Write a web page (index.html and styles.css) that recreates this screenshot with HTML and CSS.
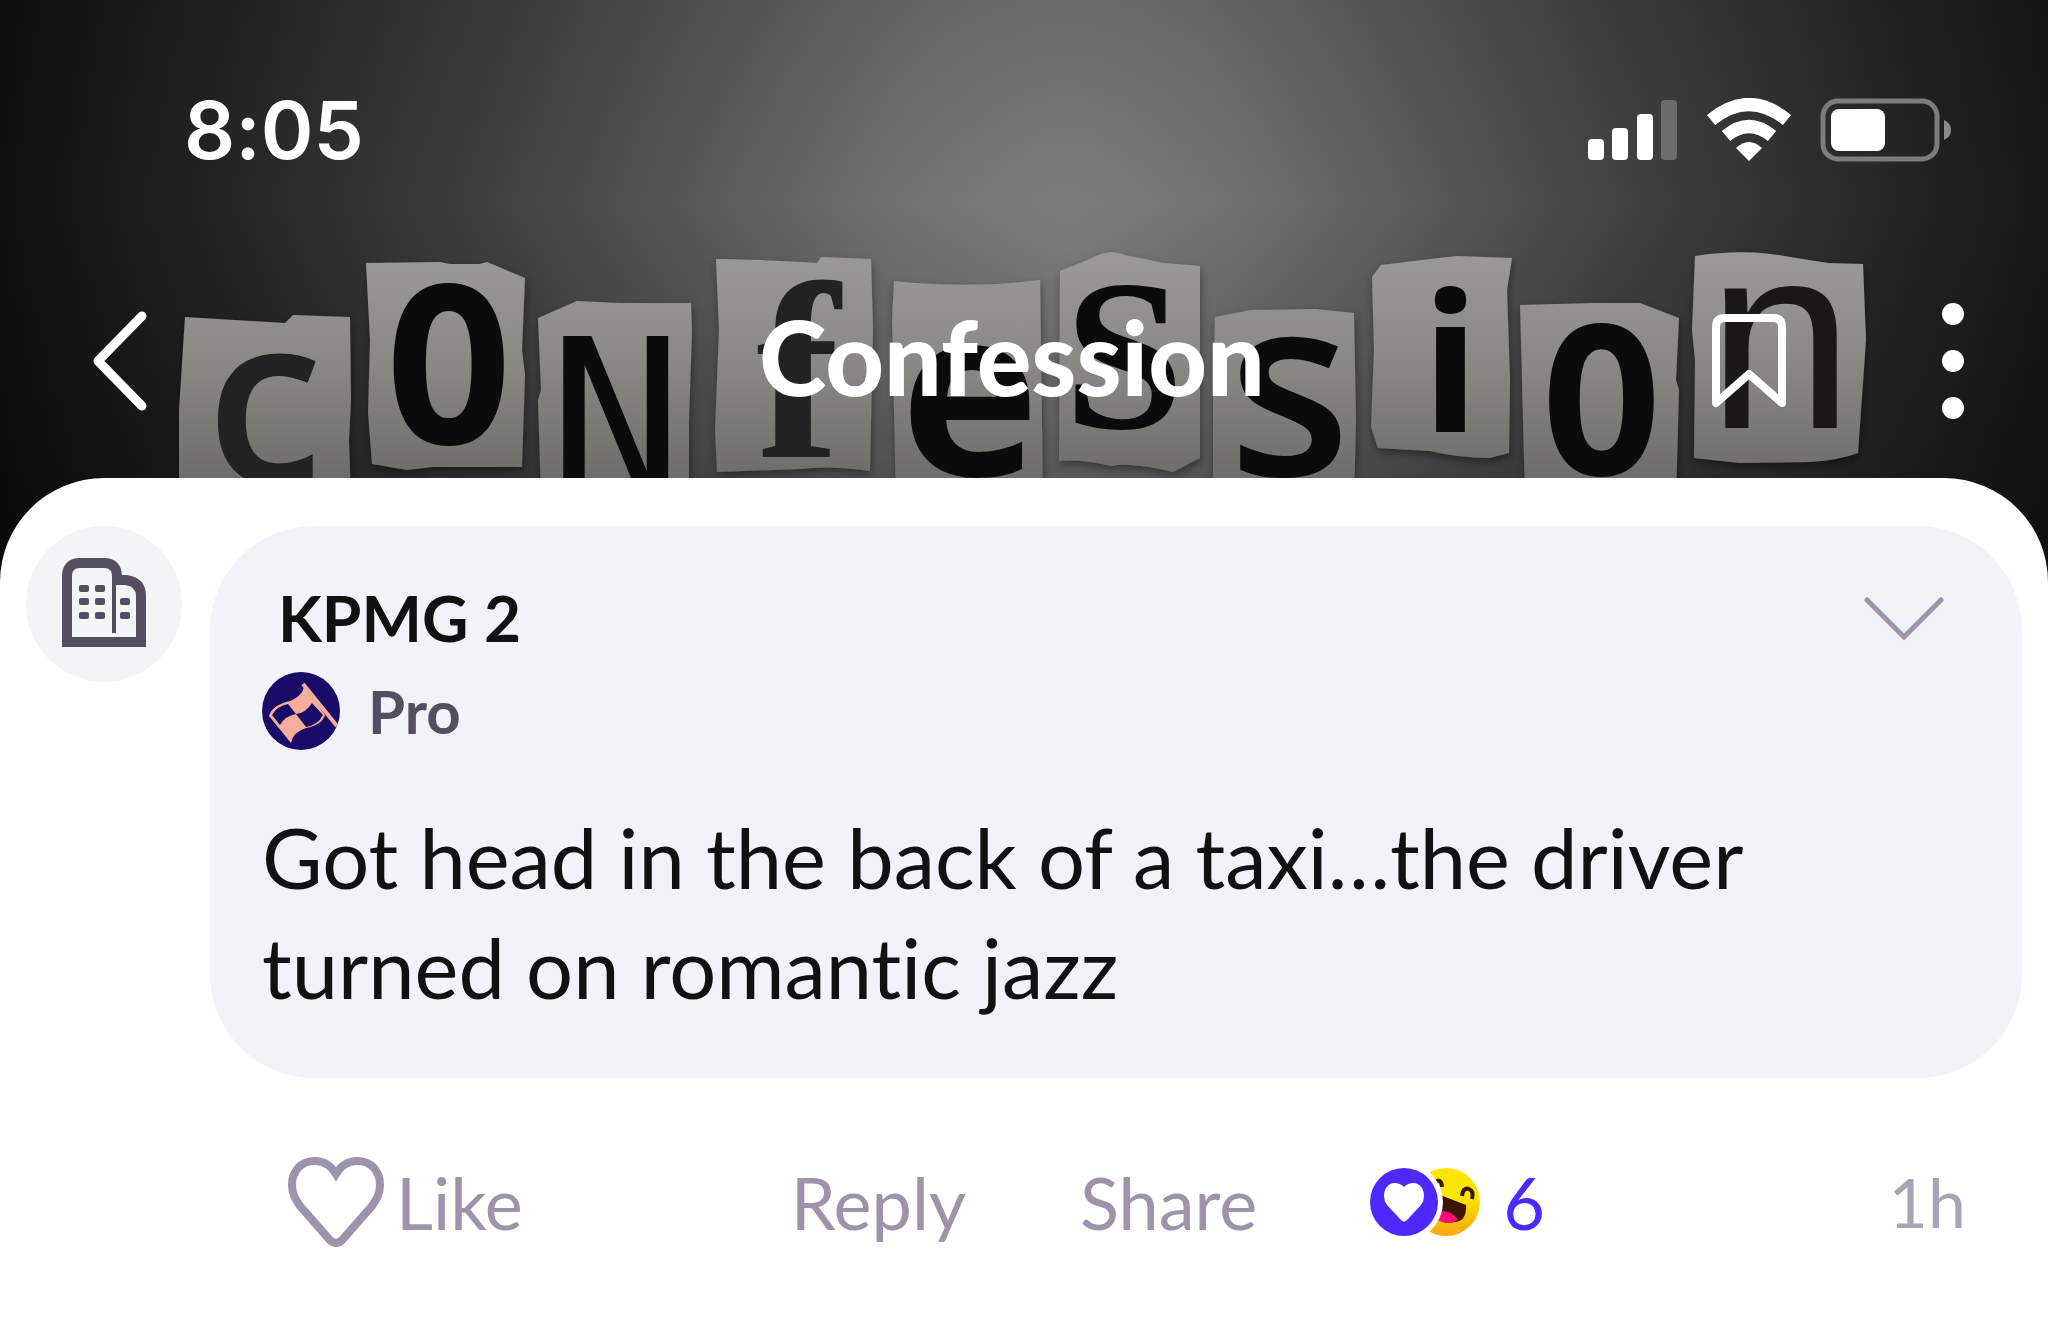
FILE: index.html
```html
<!DOCTYPE html>
<html lang="en">
<head>
    <meta charset="UTF-8">
    <meta name="viewport" content="width=device-width, initial-scale=1.0">
    <title>Confession</title>

    <link rel="stylesheet" href="styles.css">
</head>
<body>
    <header class="hero">
        <!-- Cover art: ransom note letters -->
        <svg class="cover" viewBox="0 0 2048 582" preserveAspectRatio="xMidYMin slice" aria-hidden="true">
            <defs>
                <linearGradient id="paper" gradientUnits="userSpaceOnUse" x1="0" y1="250" x2="0" y2="480">
                    <stop offset="0" stop-color="#9c9a98"/>
                    <stop offset="0.5" stop-color="#898885"/>
                    <stop offset="1" stop-color="#6d6c68"/>
                </linearGradient>
                <filter id="soft" x="-5%" y="-5%" width="110%" height="110%">
                    <feDropShadow dx="1" dy="4" stdDeviation="4" flood-color="#000" flood-opacity="0.4"/>
                </filter>
            </defs>
            <g fill="url(#paper)" filter="url(#soft)">
                <path d="M185 317L285 323L293 315L350 317L351 400L349 440L351 500H179V410Z"/>
                <path d="M366 263L440 262L450 264L480 264L487 262L525 278L522 350L525 375L522 467H432L407 470L372 464L368 413L370 340Z"/>
                <path d="M538 318L577 301L620 303L691 303L692 330L689 420V500H541L538 400L541 390Z"/>
                <path d="M716 259Q780 260 817 263L821 257L871 259L873 330L870 471Q830 465 800 469L717 472L715 430L719 330Z"/>
                <path d="M894 281Q969 289 1040 280L1043 500H896L892 320Z"/>
                <path d="M1060 271L1090 259Q1108 248 1125 255L1164 263L1200 266V458L1173 472Q1130 462 1112 466Q1080 459 1059 461Z"/>
                <path d="M1215 317L1251 310L1316 309L1354 313L1356 420L1354 500H1213V400Z"/>
                <path d="M1372 277L1381 265Q1420 260 1457 256L1512 258L1507 290L1510 380L1509 453L1489 458Q1460 458 1430 451L1378 448L1371 427L1374 350Z"/>
                <path d="M1520 305L1593 303L1640 303L1679 318L1676 380L1679 390L1676 500H1525L1521 340Z"/>
                <path d="M1695 256Q1746 248 1790 257L1828 263L1863 264L1866 340L1858 453Q1840 460 1810 462L1740 463L1694 458L1695 360L1692 330Z"/>
            </g>
            <g class="letters">
                <text class="sans dim" x="206" y="484" font-size="236">c</text>
                <text class="mono bold" x="384" y="443" font-size="215">O</text>
                <text class="mono" x="548" y="500" font-size="225">N</text>
                <text class="serif dim" x="756" y="457" font-size="252">f</text>
                <text class="sans bold" x="900" y="476" font-size="236">e</text>
                <text class="serif bold" x="1064" y="428" font-size="216">S</text>
                <text class="sans" x="1228" y="476" font-size="252">s</text>
                <text class="sans bold" x="1421" y="432" font-size="193">i</text>
                <text class="mono bold" x="1540" y="474" font-size="204">O</text>
                <text class="plain" x="1707" y="428" font-size="264">n</text>
            </g>
        </svg>

        <div class="statusbar">
            <span class="time">8:05</span>
            <div class="status-icons">
                <svg width="91" height="62" viewBox="0 0 91 62" aria-hidden="true">
                    <g fill="#fff">
                        <rect x="1" y="40" width="16" height="21" rx="4"/>
                        <rect x="25" y="29" width="16" height="32" rx="4"/>
                        <rect x="50" y="15" width="16" height="46" rx="4"/>
                        <rect x="74" y="1" width="16" height="60" rx="4" opacity="0.25"/>
                    </g>
                </svg>
                <svg width="86" height="64" viewBox="0 0 86 64" aria-hidden="true">
                    <g fill="none" stroke="#fff" stroke-width="13">
                        <path d="M5 22Q43 -9 81 22"/>
                        <path d="M20 38Q43 19 66 38"/>
                    </g>
                    <path d="M30 50Q43 38 56 50L43 63Z" fill="#fff"/>
                </svg>
                <svg width="132" height="64" viewBox="0 0 132 64" aria-hidden="true">
                    <rect x="3" y="3" width="114" height="58" rx="15" fill="none" stroke="#7c7c7c" stroke-width="5"/>
                    <rect x="11" y="11" width="54" height="42" rx="8" fill="#fff"/>
                    <path d="M124 22Q131 25 131 32Q131 39 124 42Z" fill="#8a8a8a"/>
                </svg>
            </div>
        </div>

        <nav class="navbar">
            <button class="icon-btn back" aria-label="Back">
                <svg width="60" height="104" viewBox="0 0 60 104">
                    <path d="M54 7L10 52L54 97" fill="none" stroke="#fff" stroke-width="9" stroke-linecap="round" stroke-linejoin="round"/>
                </svg>
            </button>
            <h1 class="title">Confession</h1>
            <div class="nav-actions">
                <button class="icon-btn" aria-label="Bookmark">
                    <svg width="76" height="98" viewBox="0 0 76 98">
                        <path d="M5 91V15Q5 6 14 6H62Q71 6 71 15V91L38 62Z" fill="none" stroke="#fff" stroke-width="8" stroke-linejoin="round"/>
                    </svg>
                </button>
                <button class="icon-btn" aria-label="More">
                    <svg width="22" height="118" viewBox="0 0 22 118">
                        <g fill="#fff">
                            <circle cx="11" cy="12" r="11"/>
                            <circle cx="11" cy="59" r="11"/>
                            <circle cx="11" cy="106" r="11"/>
                        </g>
                    </svg>
                </button>
            </div>
        </nav>
    </header>

    <main class="sheet">
        <article class="comment">
            <!-- Company avatar -->
            <div class="avatar">
                <svg width="84" height="92" viewBox="0 0 84 92" aria-hidden="true">
                    <g fill="none" stroke="#544e60" stroke-width="10">
                        <path d="M5 84V19Q5 5 18 5H42Q55 5 55 19V22H64Q79 24 79 38V84Z"/>
                        <path d="M52 18V75" stroke-width="4"/>
                        <path d="M53 22H65"/>
                    </g>
                    <g fill="#544e60">
                        <rect x="17" y="27" width="10" height="7" rx="2"/>
                        <rect x="33" y="27" width="10" height="7" rx="2"/>
                        <rect x="17" y="40" width="10" height="7" rx="2"/>
                        <rect x="33" y="40" width="10" height="7" rx="2"/>
                        <rect x="58" y="40" width="10" height="7" rx="2"/>
                        <rect x="17" y="54" width="10" height="7" rx="2"/>
                        <rect x="33" y="54" width="10" height="7" rx="2"/>
                        <rect x="58" y="54" width="10" height="7" rx="2"/>
                    </g>
                </svg>
            </div>

            <div class="comment-body">
                <div class="bubble">
                    <div class="bubble-head">
                        <h2 class="author">KPMG 2</h2>
                        <button class="icon-btn" aria-label="Options">
                            <svg width="80" height="46" viewBox="0 0 80 46">
                                <path d="M3 5L40 42L77 5" fill="none" stroke="#9d93ab" stroke-width="5" stroke-linecap="round"/>
                            </svg>
                        </button>
                    </div>
                    <div class="badge">
                        <svg width="78" height="78" viewBox="0 0 78 78" aria-hidden="true">
                            <circle cx="39" cy="39" r="39" fill="#1b0b68"/>
                            <path d="M41 12L75 54" stroke="#f5ae9c" stroke-width="4"/>
                            <path d="M42 13Q42 23 28 29Q10 33 7 44L29 71Q31 60 44 56Q60 53 63 43Z" fill="#f5ae9c"/>
                            <path d="M10 43Q15 34 26 32L34 42Q23 44 18 53Z" fill="#1b0b68"/>
                            <path d="M34 42Q44 41 50 31L61 43Q56 53 44 55Z" fill="#1b0b68"/>
                        </svg>
                        <span>Pro</span>
                    </div>
                    <p class="message">Got head in the back of a taxi…the driver turned on romantic jazz</p>
                </div>

                <div class="actions">
                    <button class="action like">
                        <svg width="96" height="92" viewBox="0 0 96 92" aria-hidden="true">
                            <path d="M48 18C42 8 35 5 27 5C13 5 4 15 4 29C4 38 8 44 12 50L41 83Q48 91 55 83L84 50C88 44 92 38 92 29C92 15 83 5 69 5C61 5 54 8 48 18Z" fill="none" stroke="#9d93ab" stroke-width="8"/>
                        </svg>
                        Like
                    </button>
                    <button class="action reply">Reply</button>
                    <button class="action share">Share</button>
                    <button class="action reactions">
                        <svg width="112" height="70" viewBox="0 0 112 70" aria-hidden="true">
                            <defs>
                                <linearGradient id="smile" x1="0" y1="0" x2="0" y2="1">
                                    <stop offset="0.4" stop-color="#ffe600"/>
                                    <stop offset="1" stop-color="#ffa712"/>
                                </linearGradient>
                            </defs>
                            <circle cx="77" cy="35" r="34" fill="url(#smile)"/>
                            <path d="M64 17Q72 9 73 20" fill="none" stroke="#3a1505" stroke-width="4"/>
                            <path d="M93 29Q94 20 100 22Q105 24 103 32" fill="none" stroke="#3a1505" stroke-width="4"/>
                            <path d="M66 26L97 38Q98 54 86 55Q74 58 66 50Z" fill="#3a1505"/>
                            <path d="M66 43Q83 43 89 53Q76 60 66 50Z" fill="#ff0a7a"/>
                            <circle cx="35" cy="35" r="39" fill="#fff"/>
                            <circle cx="35" cy="35" r="34" fill="#4d29ff"/>
                            <path d="M35 20C32 17 29 16 26 16C19 16 15 22 15 29Q15 34 18 38L32 53Q35 56 38 53L52 38Q55 34 55 29C55 22 51 16 44 16C41 16 38 17 35 20Z" fill="#fff"/>
                        </svg>
                        6
                    </button>
                    <time class="age">1h</time>
                </div>
            </div>
        </article>
    </main>
</body>
</html>
```
FILE: styles.css
```css
/* Page */
body {
    margin: 0;
    background-color: #fff;
    font-family: Lato, 'Open Sans', sans-serif;
    font-variant-ligatures: none;
    color: #111;
}

button {
    border: none;
    padding: 0;
    background: none;
    font-family: inherit;
    cursor: pointer;
}

svg {
    display: block;
    flex-shrink: 0;
}

/* Header */
.hero {
    position: relative;
    padding: 90px 96px 160px 60px;
    background:
        linear-gradient(rgba(0, 0, 0, 0.1), rgba(0, 0, 0, 0) 35%, rgba(0, 0, 0, 0.35)),
        radial-gradient(ellipse 54% 380% at 52% 40%, #7e7e7e 0%, #727272 15%, #454545 48%, #272727 74%, #0c0c0c 100%);
}

.cover {
    position: absolute;
    top: 0;
    left: 0;
    width: 100%;
    height: 100%;
}

.letters {
    fill: #0b0b0b;
}

.letters .dim {
    fill: #222;
}

.letters .sans {
    font-family: 'Open Sans', sans-serif;
    font-weight: 600;
}

.letters .plain {
    font-family: 'Liberation Sans', sans-serif;
    fill: #191817;
}

.letters .mono {
    font-family: 'DejaVu Sans Mono', monospace;
}

.letters .serif {
    font-family: 'Liberation Serif', serif;
    font-weight: 700;
}

.letters .bold {
    font-weight: 700;
}

.statusbar {
    position: relative;
    display: flex;
    justify-content: space-between;
    align-items: center;
    padding-left: 124px;
}

.time {
    font-family: Inter, sans-serif;
    font-size: 80px;
    line-height: 80px;
    font-weight: 600;
    color: #fff;
}

.status-icons {
    display: flex;
    align-items: center;
    gap: 28px;
}

.navbar {
    position: relative;
    display: grid;
    grid-template-columns: 1fr auto 1fr;
    align-items: center;
    height: 120px;
    margin: 131px -12px 1px 0;
}

.back {
    justify-self: start;
    margin-left: 28px;
}

.title {
    margin: 0;
    padding-bottom: 8px;
    font-size: 102px;
    line-height: 108px;
    font-weight: 900;
    color: #fff;
}

.nav-actions {
    display: flex;
    justify-content: flex-end;
    align-items: center;
    gap: 155px;
}

/* Content */
.sheet {
    position: relative;
    margin-top: -104px;
    padding: 48px 26px 80px;
    background-color: #fff;
    border-radius: 104px 104px 0 0;
}

.comment {
    display: flex;
    gap: 28px;
}

.avatar {
    display: flex;
    flex-shrink: 0;
    justify-content: center;
    align-items: center;
    width: 156px;
    height: 156px;
    border-radius: 50%;
    background-color: #f2f4f6;
}

.comment-body {
    flex: 1;
}

.bubble {
    padding: 52px 78px 56px 52px;
    border-radius: 104px;
    background-color: #f2f3f8;
}

.bubble-head {
    display: flex;
    justify-content: space-between;
    align-items: center;
    padding-left: 16px;
}

.author {
    margin: 0;
    font-size: 64px;
    line-height: 80px;
    font-weight: 700;
}

.badge {
    display: flex;
    align-items: center;
    gap: 28px;
    margin-top: 14px;
    font-size: 60px;
    line-height: 78px;
    font-weight: 700;
    color: #544e60;
}

.message {
    margin: 52px 0 0;
    font-size: 83px;
    line-height: 110px;
}

/* Action row */
.actions {
    display: flex;
    align-items: center;
    padding: 76px 56px 0 78px;
}

.action {
    display: flex;
    align-items: center;
    font-size: 72px;
    line-height: 96px;
    color: #9d93ab;
}

.like {
    gap: 12px;
}

.reply {
    margin-left: 268px;
}

.share {
    margin-left: 114px;
}

.reactions {
    gap: 22px;
    margin-left: 112px;
    color: #4d29ff;
}

.age {
    margin-left: auto;
    font-size: 68px;
    line-height: 96px;
    color: #a9a3b7;
}
```
